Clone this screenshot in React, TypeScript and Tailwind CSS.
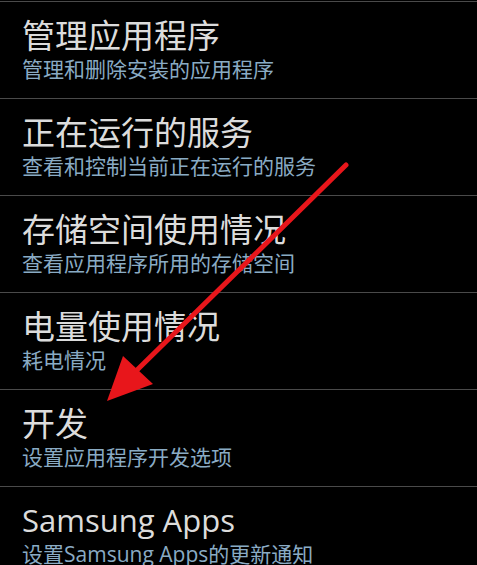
import React from 'react';

const items = [
  { title: '管理应用程序', sub: '管理和删除安装的应用程序' },
  { title: '正在运行的服务', sub: '查看和控制当前正在运行的服务' },
  { title: '存储空间使用情况', sub: '查看应用程序所用的存储空间' },
  { title: '电量使用情况', sub: '耗电情况' },
  { title: '开发', sub: '设置应用程序开发选项' },
  { title: 'Samsung Apps', sub: '设置Samsung Apps的更新通知', latin: true },
];

const App: React.FC = () => {
  return (
    <div
      className="relative w-[477px] h-[565px] overflow-hidden bg-black"
      style={{ fontFamily: '"Open Sans", "Noto Sans CJK SC", sans-serif' }}
    >
      <div className="h-px bg-[#4a4a4a] mt-[1px]" />
      {items.map((item) => (
        <div key={item.title} className="h-[97px] border-b border-[#4a4a4a] pl-[22px] pt-[14px] flex flex-col">
          <div className={(item.latin ? 'text-[31px]' : 'text-[33px]') + ' leading-[39px] text-[#dcdcdc]'}>{item.title}</div>
          <div className="text-[21px] leading-[26px] mt-[1px] text-[#8aabc4] whitespace-nowrap">{item.sub}</div>
        </div>
      ))}

      {/* red annotation arrow */}
      <svg className="absolute inset-0 pointer-events-none" width="477" height="565" viewBox="0 0 477 565">
        <line x1="346" y1="165" x2="135" y2="372" stroke="#e8161b" strokeWidth="5" strokeLinecap="round" />
        <polygon points="107,401 123,356 153,384" fill="#e8161b" />
      </svg>
    </div>
  );
};

export default App;
